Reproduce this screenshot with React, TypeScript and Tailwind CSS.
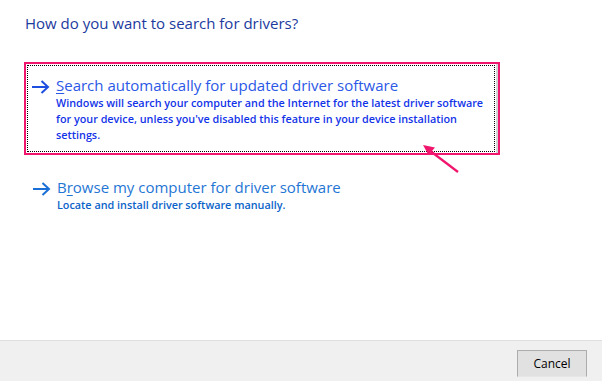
import React from "react";

const BlueArrow = ({ color }: { color: string }) => (
  <svg width="19" height="14" viewBox="0 0 19 14" fill="none" className="shrink-0">
    <path d="M1 7H17" stroke={color} strokeWidth="2" />
    <path d="M10.5 1L17 7L10.5 13" stroke={color} strokeWidth="2" />
  </svg>
);

const PinkPointer = () => (
  <svg
    width="44"
    height="36"
    viewBox="0 0 44 36"
    className="absolute left-[419px] top-[140px]"
  >
    <path d="M39 32L10 10" stroke="#f0166e" strokeWidth="2.2" />
    <path d="M4 5L16 7.5L9.5 15Z" fill="#f0166e" />
  </svg>
);

const App = () => {
  return (
    <div
      className="relative flex h-[381px] w-[602px] flex-col overflow-hidden bg-white"
      style={{ fontFamily: '"Open Sans", "Noto Sans", sans-serif' }}
    >
      <main className="flex flex-1 flex-col pt-[13px]">
        <h1 className="pl-[25px] text-[15px] leading-[20px] text-[#1c3a9e]">
          How do you want to search for drivers?
        </h1>

        <div className="ml-[24px] mt-[29px] flex h-[93px] w-[476px] border-2 border-[#f0166e]">
          <div className="flex flex-1 border-r-2 border-[#d4d4d4] p-px">
            <div className="flex flex-1 gap-[6px] border border-dotted border-black pl-[3px] pt-[9px]">
              <div className="pt-[5px]">
                <BlueArrow color="#1f4fe0" />
              </div>
              <div className="flex flex-col">
                <span className="whitespace-nowrap text-[15px] leading-[20px] text-[#2b58e6]">
                  <span className="underline underline-offset-2">S</span>earch automatically for updated driver software
                </span>
                <p className="whitespace-nowrap text-[10.8px] font-semibold leading-[16px] text-[#1233e8]">
                  Windows will search your computer and the Internet for the latest driver software
                  <br />
                  for your device, unless you've disabled this feature in your device installation
                  <br />
                  settings.
                </p>
              </div>
            </div>
          </div>
        </div>

        <div className="ml-[32px] mt-[22px] flex gap-[6px]">
          <div className="pt-[5px]">
            <BlueArrow color="#1a6fd6" />
          </div>
          <div className="flex flex-col">
            <span className="text-[15px] leading-[20px] text-[#1f76d4]">
              B<span className="underline underline-offset-2">r</span>owse my computer for driver software
            </span>
            <span className="text-[10.8px] font-semibold leading-[16px] text-[#0b63c9]">
              Locate and install driver software manually.
            </span>
          </div>
        </div>
      </main>

      <footer className="flex h-[41px] items-start justify-end border-t border-[#dfdfdf] bg-[#f0f0f0] pr-[15px] pt-[9px]">
        <button className="h-[27px] w-[70px] border border-[#adadad] border-b-[#e6e6e6] bg-[#e1e1e1] text-[12px] leading-[24px] text-black">
          Cancel
        </button>
      </footer>

      <PinkPointer />
    </div>
  );
};

export default App;
